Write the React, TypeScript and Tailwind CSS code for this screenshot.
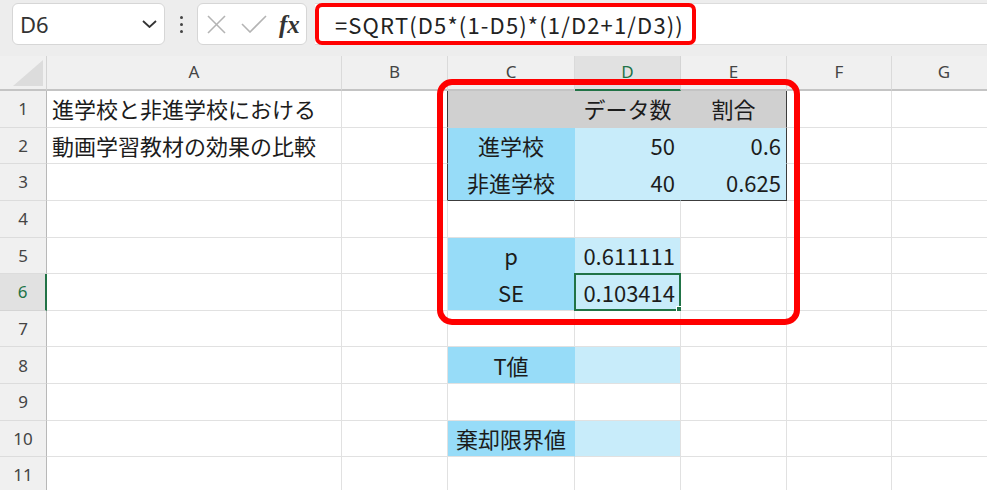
import React from 'react'

const CJK = "font-['Noto_Sans_CJK_JP','Noto_Sans',sans-serif]"
const UI = "font-['Noto_Sans','Open_Sans',sans-serif]"

const COLS = ['A', 'B', 'C', 'D', 'E', 'F', 'G']

type Cell = { text?: string; align?: 'left' | 'center' | 'right'; color?: string }

// fill colours: gray header, strong blue labels, pale blue values
const GRAY = 'bg-[#d0d0d0] border-r-[#d0d0d0] border-b-[#d0d0d0]'
const BLUE = 'bg-[#97dcf8] border-r-[#97dcf8] border-b-[#97dcf8]'
const PALE = 'bg-[#c8ecfa] border-r-[#c8ecfa] border-b-[#c8ecfa]'

const CELLS: Record<string, Cell> = {
  A1: { text: '進学校と非進学校における' },
  A2: { text: '動画学習教材の効果の比較' },
  B1: { color: 'bg-white border-r-[#3c3c3c] border-b-[#e1e1e1]' },
  B2: { color: 'bg-white border-r-[#3c3c3c] border-b-[#e1e1e1]' },
  B3: { color: 'bg-white border-r-[#3c3c3c] border-b-[#e1e1e1]' },
  C1: { color: GRAY },
  D1: { text: 'データ数', align: 'center', color: GRAY },
  E1: { text: '割合', align: 'center', color: 'bg-[#d0d0d0] border-r-[#3c3c3c] border-b-[#d0d0d0]' },
  C2: { text: '進学校', align: 'center', color: BLUE },
  D2: { text: '50', align: 'right', color: PALE },
  E2: { text: '0.6', align: 'right', color: 'bg-[#c8ecfa] border-r-[#3c3c3c] border-b-[#c8ecfa]' },
  C3: { text: '非進学校', align: 'center', color: 'bg-[#97dcf8] border-r-[#97dcf8] border-b-[#3c3c3c]' },
  D3: { text: '40', align: 'right', color: 'bg-[#c8ecfa] border-r-[#c8ecfa] border-b-[#3c3c3c]' },
  E3: { text: '0.625', align: 'right', color: 'bg-[#c8ecfa] border-r-[#3c3c3c] border-b-[#3c3c3c]' },
  C5: { text: 'p', align: 'center', color: BLUE },
  D5: { text: '0.611111', align: 'right', color: 'bg-[#c8ecfa] border-r-[#e1e1e1] border-b-[#c8ecfa]' },
  C6: { text: 'SE', align: 'center', color: 'bg-[#97dcf8] border-r-[#97dcf8] border-b-[#e1e1e1]' },
  D6: { text: '0.103414', align: 'right', color: 'bg-[#c8ecfa] border-r-[#e1e1e1] border-b-[#e1e1e1]' },
  C8: { text: 'T値', align: 'center', color: 'bg-[#97dcf8] border-r-[#97dcf8] border-b-[#e1e1e1]' },
  D8: { color: 'bg-[#c8ecfa] border-r-[#e1e1e1] border-b-[#e1e1e1]' },
  C10: { text: '棄却限界値', align: 'center', color: 'bg-[#97dcf8] border-r-[#97dcf8] border-b-[#e1e1e1]' },
  D10: { color: 'bg-[#c8ecfa] border-r-[#e1e1e1] border-b-[#e1e1e1]' },
}

const ALIGN = { left: 'justify-start', center: 'justify-center', right: 'justify-end' }

function FormulaBar() {
  return (
    <div className="h-[56px] flex items-start pt-[3px] pl-[12px] bg-[#ededed]">
      {/* name box */}
      <div className="w-[153px] h-[42px] bg-white border border-[#d6d6d6] rounded-[6px] flex items-center justify-between pl-[7px] pr-[7px]">
        <span className={`${UI} text-[22px] text-[#333]`}>D6</span>
        <svg width="15" height="8" viewBox="0 0 15 8" fill="none" stroke="#333" strokeWidth="1.8">
          <polyline points="1,1 7.5,7 14,1" />
        </svg>
      </div>

      <div className="w-[32px] h-[42px] flex flex-col items-center justify-center gap-[4px]">
        <span className="w-[3px] h-[3px] rounded-full bg-[#444]" />
        <span className="w-[3px] h-[3px] rounded-full bg-[#444]" />
        <span className="w-[3px] h-[3px] rounded-full bg-[#444]" />
      </div>

      {/* cancel / enter / fx */}
      <div className="w-[110px] h-[42px] bg-white border border-[#d6d6d6] rounded-[6px] flex items-center pl-[9px]">
        <svg width="19" height="19" viewBox="0 0 19 19" stroke="#b4b4b4" strokeWidth="1.6">
          <line x1="1" y1="1" x2="18" y2="18" />
          <line x1="18" y1="1" x2="1" y2="18" />
        </svg>
        <svg className="ml-[15px]" width="26" height="18" viewBox="0 0 26 18" fill="none" stroke="#b4b4b4" strokeWidth="1.6">
          <polyline points="1,9 9,17 25,1" />
        </svg>
        <span className="ml-[12px] font-['Liberation_Serif',serif] italic font-bold text-[25px] leading-none text-[#333]">fx</span>
      </div>

      {/* formula input */}
      <div className="ml-[8px] flex-1 h-[42px] bg-white border-y border-[#dcdcdc] flex items-center">
        <div className="w-[381px] h-[42px] border-[4px] border-[#ff0000] rounded-[7px] flex items-center pl-[16px]">
          <span className={`${CJK} text-[22px] tracking-[1.15px] text-[#222] whitespace-nowrap`}>
            =SQRT(D5*(1-D5)*(1/D2+1/D3))
          </span>
        </div>
      </div>
    </div>
  )
}

function Sheet() {
  const rows = Array.from({ length: 11 }, (_, i) => i + 1)
  return (
    <div className="grid grid-cols-[47px_295px_106px_127px_106px_106px_105px_105px] grid-rows-[35px_repeat(11,36.65px)] bg-white">
      {/* corner */}
      <div className="bg-[#f0f0f0] border-r border-[#d4d4d4] border-b-2 border-b-[#c4c4c4] flex items-end justify-end pr-[3px] pb-[3px]">
        <svg width="30" height="26" viewBox="0 0 30 26">
          <polygon points="0,26 30,0 30,26" fill="#dcdcdc" />
        </svg>
      </div>
      {COLS.map((c) =>
        c === 'D' ? (
          <div key={c} className={`${UI} bg-[#e1e1e1] border-r border-[#d4d4d4] border-b-2 border-b-[#217346] flex items-center justify-center text-[17px] text-[#217346] pb-[2px]`}>
            {c}
          </div>
        ) : (
          <div key={c} className={`${UI} bg-[#f0f0f0] border-r border-[#dadada] border-b-2 border-b-[#c4c4c4] flex items-center justify-center text-[17px] text-[#444] pb-[2px]`}>
            {c}
          </div>
        )
      )}

      {rows.map((r) => (
        <React.Fragment key={r}>
          {r === 6 ? (
            <div className={`${UI} bg-[#e1e1e1] border-r-2 border-[#217346] border-b border-b-[#d4d4d4] flex items-center justify-center text-[17px] text-[#217346]`}>
              {r}
            </div>
          ) : (
            <div className={`${UI} bg-[#f0f0f0] border-r border-[#b8b8b8] border-b border-b-[#dcdcdc] flex items-center justify-center text-[17px] text-[#444]`}>
              {r}
            </div>
          )}
          {COLS.map((c) => {
            const cell = CELLS[`${c}${r}`] ?? {}
            const color = cell.color ?? 'bg-white border-r-[#e1e1e1] border-b-[#e1e1e1]'
            const align = ALIGN[cell.align ?? 'left']
            return (
              <div
                key={c}
                className={`${CJK} ${color} ${align} relative border-r border-b flex items-center px-[5px] text-[22px] text-[#1c1c1c] whitespace-nowrap`}
              >
                {cell.text}
                {c === 'D' && r === 6 && (
                  <div className="absolute -top-px -left-px -right-px -bottom-px border-2 border-[#217346]">
                    <div className="absolute -right-[5px] -bottom-[5px] w-[8px] h-[8px] bg-[#217346] border border-white" />
                  </div>
                )}
              </div>
            )
          })}
        </React.Fragment>
      ))}
    </div>
  )
}

export default function App() {
  return (
    <div className="relative w-[987px] h-[490px] overflow-hidden bg-[#ededed]">
      <FormulaBar />
      <Sheet />
      {/* red annotation around C1:E6 */}
      <div className="absolute left-[437px] top-[79px] w-[363px] h-[246px] border-[6px] border-[#ff0000] rounded-[15px] pointer-events-none" />
    </div>
  )
}
